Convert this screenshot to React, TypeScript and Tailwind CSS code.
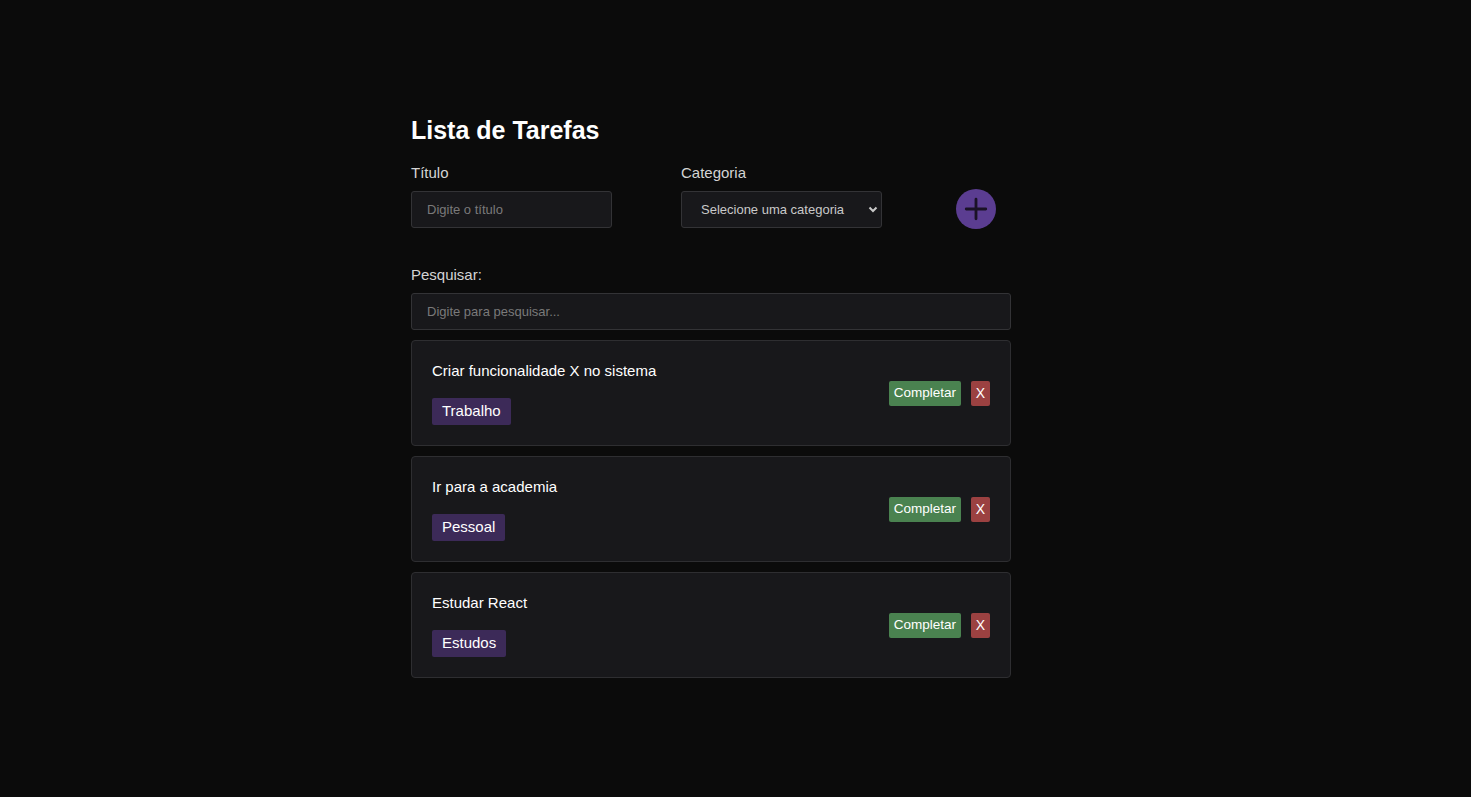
import React, { useState } from "react";

type Task = { id: number; title: string; category: string };

const tasks: Task[] = [
  { id: 1, title: "Criar funcionalidade X no sistema", category: "Trabalho" },
  { id: 2, title: "Ir para a academia", category: "Pessoal" },
  { id: 3, title: "Estudar React", category: "Estudos" },
];

const PlusIcon = () => (
  <svg className="w-[26px] h-[26px]" viewBox="0 0 24 24" fill="none" stroke="#1a1226" strokeWidth={2.6} strokeLinecap="round">
    <path d="M12 3v18M3 12h18" />
  </svg>
);

export default function App() {
  const [search, setSearch] = useState("");
  const [title, setTitle] = useState("");

  return (
    <div className="min-h-[797px] bg-[#0b0b0b] text-white font-['Liberation_Sans',Arial,sans-serif]">
      <div className="ml-[411px] w-[600px] pt-[116px]">
        <h1 className="text-[25px] font-bold leading-[28px] text-white">Lista de Tarefas</h1>

        {/* Form */}
        <div className="mt-[20px] flex items-end">
          <div className="flex flex-col w-[201px]">
            <label className="text-[15px] leading-[18px] text-[#d4d4d4] mb-[9px]">Título</label>
            <input
              value={title}
              onChange={(e) => setTitle(e.target.value)}
              placeholder="Digite o título"
              className="h-[37px] px-[15px] text-[13px] bg-[#18181b] border border-[#333336] rounded-[3px] text-white placeholder:text-[#7a7a7a] outline-none"
            />
          </div>
          <div className="flex flex-col w-[201px] ml-[69px]">
            <label className="text-[15px] leading-[18px] text-[#d4d4d4] mb-[9px]">Categoria</label>
            <div className="relative">
              <select className="appearance-none w-full h-[37px] pl-[19px] pr-[28px] text-[13px] bg-[#18181b] border border-[#333336] rounded-[3px] text-[#c9c9c9] outline-none">
                <option>Selecione uma categoria</option>
                <option>Trabalho</option>
                <option>Pessoal</option>
                <option>Estudos</option>
              </select>
              <svg className="absolute right-[4px] top-[13px] w-[10px] h-[10px] pointer-events-none" viewBox="0 0 10 10" fill="none" stroke="#c9c9c9" strokeWidth={2}>
                <path d="M1.5 3.5L5 7l3.5-3.5" />
              </svg>
            </div>
          </div>
          <button className="ml-[74px] mb-[-1px] w-[40px] h-[40px] rounded-full bg-[#5b3d91] flex items-center justify-center">
            <PlusIcon />
          </button>
        </div>

        {/* Search */}
        <div className="mt-[38px] flex flex-col">
          <label className="text-[15px] leading-[18px] text-[#d4d4d4] mb-[9px]">Pesquisar:</label>
          <input
            value={search}
            onChange={(e) => setSearch(e.target.value)}
            placeholder="Digite para pesquisar..."
            className="h-[37px] px-[15px] text-[13px] bg-[#18181b] border border-[#333336] rounded-[3px] text-white placeholder:text-[#7a7a7a] outline-none"
          />
        </div>

        {/* List */}
        <div className="mt-[10px] flex flex-col gap-[10px]">
          {tasks
            .filter((t) => t.title.toLowerCase().includes(search.toLowerCase()))
            .map((t) => (
              <div
                key={t.id}
                className="h-[106px] px-[20px] bg-[#18181b] border border-[#2e2e31] rounded-[4px] flex items-center justify-between"
              >
                <div className="flex flex-col items-start pt-[1px]">
                  <p className="text-[15px] leading-[18px] text-white mb-[18px]">{t.title}</p>
                  <span className="h-[27px] px-[10px] flex items-center text-[15px] text-white bg-[#3c2a58] rounded-[2px]">
                    {t.category}
                  </span>
                </div>
                <div className="flex items-center gap-[10px]">
                  <button className="h-[25px] px-[5px] text-[13.5px] text-white bg-[#4a8250] rounded-[2px]">
                    Completar
                  </button>
                  <button className="h-[25px] w-[19px] text-[14px] text-white bg-[#9b4141] rounded-[2px]">X</button>
                </div>
              </div>
            ))}
        </div>
      </div>
    </div>
  );
}
